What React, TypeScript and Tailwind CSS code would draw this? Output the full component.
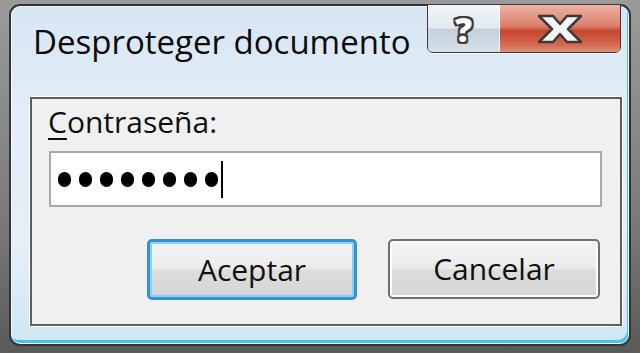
import React from 'react';

const font = { fontFamily: '"Open Sans", "Noto Sans", sans-serif' };

function CaptionButtons() {
  return (
    <div className="absolute -top-[2px] right-[8px] flex h-[49px] overflow-hidden rounded-b-[6px] border border-[#3a3a3a] shadow-[0_1px_0_#ffffff]">
      <div className="flex w-[72px] items-center justify-center border-r border-[#ffffffaa] bg-[linear-gradient(#f3f6f9_0%,#e3e9ef_48%,#c5d0db_52%,#d7e0e8_100%)]">
        <span
          className="text-[34px] font-extrabold leading-[34px] text-white [text-shadow:2px_0_#3b3b3b,-2px_0_#3b3b3b,0_2px_#3b3b3b,0_-2px_#3b3b3b,2px_2px_#3b3b3b,-2px_-2px_#3b3b3b,2px_-2px_#3b3b3b,-2px_2px_#3b3b3b]"
          style={font}
        >
          ?
        </span>
      </div>
      <div className="flex w-[120px] items-center justify-center bg-[linear-gradient(#eeb2a4_0%,#dc7f6d_45%,#c7452d_55%,#d56a52_85%,#e0907a_100%)]">
        <svg width="48" height="32" viewBox="0 0 48 32">
          <path
            d="M3 3 H17 L24 11 L31 3 H45 L32 16 L45 29 H31 L24 21 L17 29 H3 L16 16 Z"
            fill="#f4f4f4"
            stroke="#3b3b3b"
            strokeWidth="2.5"
            strokeLinejoin="round"
          />
        </svg>
      </div>
    </div>
  );
}

function VistaButton({ label, isDefault }: { label: string; isDefault?: boolean }) {
  return (
    <div
      className={
        isDefault
          ? 'flex h-[61px] w-[210px] items-center justify-center rounded-[5px] border-[3px] border-[#3c8fc8] bg-[linear-gradient(#f4f4f4_0%,#ebebeb_48%,#dddddd_52%,#d4d4d4_100%)] shadow-[inset_0_0_0_2px_#7fd6f7]'
          : 'flex h-[60px] w-[212px] items-center justify-center rounded-[5px] border-2 border-[#707070] bg-[linear-gradient(#f4f4f4_0%,#ebebeb_48%,#dddddd_52%,#d4d4d4_100%)] shadow-[inset_0_0_0_2px_#fbfbfb]'
      }
    >
      <span className="text-[30px] leading-none text-[#111]" style={font}>
        {label}
      </span>
    </div>
  );
}

export default function App() {
  return (
    <div className="h-[353px] w-[640px] overflow-hidden bg-[linear-gradient(#9a9a9a,#7c7c7c_60%,#5a5a5a)] pl-[9px] pt-[4px]">
      <div className="relative h-[342px] w-[622px] rounded-[11px] border-2 border-[#343434] bg-[linear-gradient(#d7e5f3_0%,#e3edf7_30%,#e6eff8_70%,#cfe6f5_100%)] shadow-[inset_0_0_0_1px_#f4f9fd,inset_-2px_-4px_0_#46c4ee]">
        <CaptionButtons />

        <div className="pl-[22px] pt-[19px]">
          <span className="text-[33px] leading-none text-[#0b0b0b]" style={font}>
            Desproteger documento
          </span>
        </div>

        <div className="ml-[19px] mt-[37px] h-[229px] w-[592px] border-2 border-[#5e5e5e] bg-[#f0f0f0] shadow-[0_0_0_1px_#ffffff]">
          <div className="pl-[16px] pt-[8px]">
            <span className="text-[30px] leading-none text-[#0f0f0f]" style={font}>
              <span className="underline decoration-2 underline-offset-[5px]">C</span>ontraseña:
            </span>
          </div>

          <div className="ml-[17px] mt-[12px] flex h-[56px] w-[553px] items-center border-2 border-[#a9a9a9] bg-white pl-[7px]">
            <div className="flex items-center gap-[8px]">
              {Array.from({ length: 8 }).map((_, i) => (
                <span key={i} className="h-[15px] w-[13px] rounded-full bg-black" />
              ))}
            </div>
            <span className="ml-[3px] h-[37px] w-[2px] bg-black" />
          </div>

          <div className="mt-[32px] flex gap-[31px] pl-[115px]">
            <VistaButton label="Aceptar" isDefault />
            <VistaButton label="Cancelar" />
          </div>
        </div>
      </div>
    </div>
  );
}
